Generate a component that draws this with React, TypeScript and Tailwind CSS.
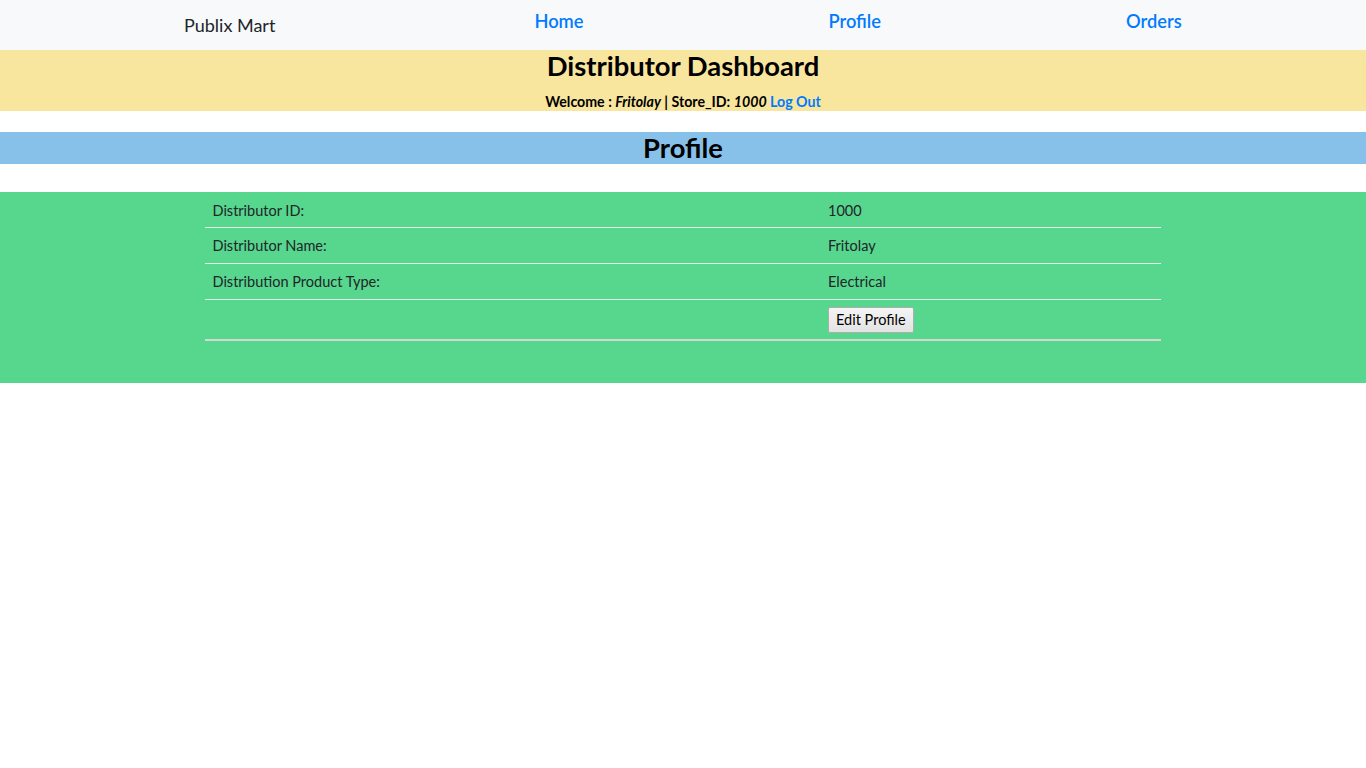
import React from "react";

export default function App() {
  const rows: [string, string][] = [
    ["Distributor ID:", "1000"],
    ["Distributor Name:", "Fritolay"],
    ["Distribution Product Type:", "Electrical"],
  ];
  return (
    <div className="min-h-[768px] bg-white font-['Lato',sans-serif] text-[#212529]">
      <nav className="flex h-[50px] bg-[#f8f9fa]">
        <div className="ml-[184px] mt-[13px] text-[18px] leading-[24px] text-[#212529]">Publix Mart</div>
        <div className="ml-[259px] mt-[9px] flex gap-[245px] text-[18.3px] font-semibold leading-[24px] text-[#007bff]">
          <a href="#">Home</a>
          <a href="#">Profile</a>
          <a href="#">Orders</a>
        </div>
      </nav>
      <header className="flex h-[61px] flex-col items-center bg-[#f8e59e] text-black">
        <h1 className="mt-[0px] text-[27.4px] font-bold leading-[32px]">Distributor Dashboard</h1>
        <p className="mt-[11px] text-[14.2px] font-bold leading-[18px]">
          Welcome : <i>Fritolay</i> | Store_ID: <i>1000</i>{" "}
          <a href="#" className="text-[#007bff]">Log Out</a>
        </p>
      </header>
      <div className="h-[21px]" />
      <div className="flex h-[32px] items-center justify-center bg-[#87c1e9]">
        <h2 className="text-[27.4px] font-bold leading-[32px] text-black">Profile</h2>
      </div>
      <div className="h-[28px]" />
      <section className="bg-[#57d68d] pb-[42px]">
        <table className="mx-auto w-[956px] border-collapse text-[14.5px] text-[#212529]">
          <tbody>
            {rows.map(([k, v], i) => (
              <tr key={k}>
                <td className={(i === 0 ? "h-[35px] pt-[3px] " : "h-[36px] pt-[2px] ") + "w-[615px] border-b border-[#e6f2ea] px-[7.5px] pb-0 align-middle"}>{k}</td>
                <td className={(i === 0 ? "pt-[3px] " : "pt-[2px] ") + "border-b border-[#e6f2ea] px-[8px] pb-0 align-middle"}>{v}</td>
              </tr>
            ))}
            <tr>
              <td className="h-[41px] w-[615px] border-b-2 border-[#d6d6d6]" />
              <td className="h-[41px] border-b-2 border-[#d6d6d6] px-[8px] pt-[2px] align-middle">
                <button className="h-[26px] rounded-[2px] border border-[#adadad] bg-gradient-to-b from-[#f4f4f4] to-[#e3e3e3] px-[7px] text-[14.5px] leading-[20px] text-black">
                  Edit Profile
                </button>
              </td>
            </tr>
          </tbody>
        </table>
      </section>
    </div>
  );
}
